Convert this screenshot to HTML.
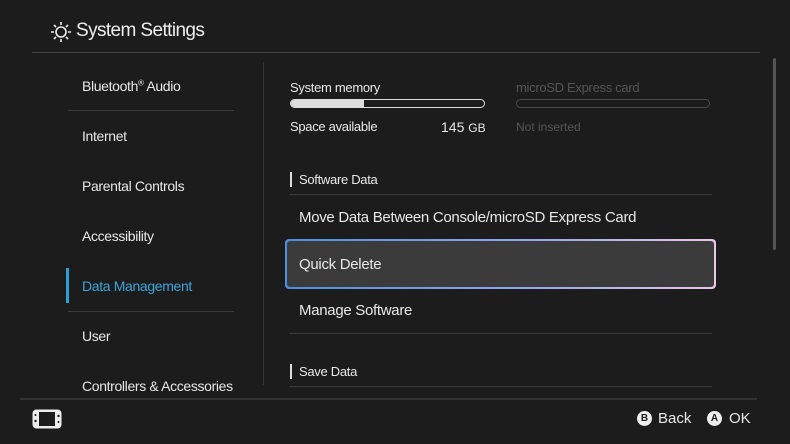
<!DOCTYPE html><html><head><style>
body{margin:0;width:790px;height:444px;background:#1c1c1c;font-family:"Liberation Sans",sans-serif;color:#e8e8e8;position:relative;overflow:hidden}
.a{position:absolute;white-space:nowrap}
.l{font-size:14px;letter-spacing:-0.35px}
.hl{position:absolute;height:1px;background:#3a3a3a}
</style></head><body>
<svg class="a" style="left:50px;top:21px" width="22" height="22" viewBox="0 0 22 22" fill="none" stroke="#eee" stroke-width="1.6"><circle cx="11" cy="11" r="5"/><path d="M11 1v3M11 18v3M1 11h3M18 11h3M4 4l2 2M16 16l2 2M4 18l2-2M16 6l2-2"/></svg>
<div class="a" style="left:76px;top:20px;font-size:19px;letter-spacing:-0.6px;color:#eee">System Settings</div>
<div class="hl" style="left:32px;top:52px;width:728px;background:#444"></div>
<div class="a l" style="left:82px;top:78px">Bluetooth<sup style="font-size:8px">®</sup> Audio</div>
<div class="hl" style="left:68px;top:110px;width:166px"></div>
<div class="a l" style="left:82px;top:128px">Internet</div>
<div class="a l" style="left:82px;top:178px">Parental Controls</div>
<div class="a l" style="left:82px;top:228px">Accessibility</div>
<div class="a" style="left:66px;top:268px;width:3px;height:35px;background:#2aa0d8"></div>
<div class="a l" style="left:82px;top:278px;color:#3aa6dc">Data Management</div>
<div class="hl" style="left:68px;top:311px;width:166px"></div>
<div class="a l" style="left:82px;top:328px">User</div>
<div class="a l" style="left:82px;top:378px">Controllers &amp; Accessories</div>
<div class="a" style="left:263px;top:62px;width:1px;height:323px;background:#333"></div>
<div class="a" style="left:773px;top:58px;width:3px;height:192px;background:#555;border-radius:2px"></div>
<div class="a" style="left:290px;top:80px;font-size:13px;letter-spacing:-0.3px">System memory</div>
<div class="a" style="left:290px;top:99px;width:193px;height:7px;border:1.5px solid #ddd;border-radius:5px;overflow:hidden"><div style="width:73px;height:7px;background:#ddd"></div></div>
<div class="a" style="left:290px;top:119px;font-size:13px;letter-spacing:-0.3px">Space available</div>
<div class="a" style="left:441px;top:119px;font-size:14px">145 <span style="font-size:12px">GB</span></div>
<div class="a" style="left:516px;top:80px;font-size:13px;color:#555;letter-spacing:-0.3px">microSD Express card</div>
<div class="a" style="left:516px;top:99px;width:192px;height:7px;border:1.5px solid #4a4a4a;border-radius:5px"></div>
<div class="a" style="left:516px;top:120px;font-size:12px;color:#555">Not inserted</div>
<div class="a" style="left:290px;top:172px;width:2px;height:15px;background:#ddd"></div>
<div class="a" style="left:299px;top:172px;font-size:13px;letter-spacing:-0.3px">Software Data</div>
<div class="hl" style="left:289px;top:194px;width:423px"></div>
<div class="a" style="left:299px;top:209px;font-size:15px;letter-spacing:-0.3px">Move Data Between Console/microSD Express Card</div>
<div class="a" style="left:285px;top:239px;width:431px;height:50px;border-radius:4px;background:linear-gradient(90deg,#4a8fe0,#9aa8e8 60%,#e8c8e8)"></div>
<div class="a" style="left:287px;top:241px;width:427px;height:46px;border-radius:3px;background:#3c3b3c"></div>
<div class="a" style="left:299px;top:256px;font-size:15px;letter-spacing:-0.3px">Quick Delete</div>
<div class="a" style="left:299px;top:302px;font-size:15px;letter-spacing:-0.3px">Manage Software</div>
<div class="hl" style="left:289px;top:333px;width:423px"></div>
<div class="a" style="left:290px;top:364px;width:2px;height:15px;background:#ddd"></div>
<div class="a" style="left:299px;top:364px;font-size:13px;letter-spacing:-0.3px">Save Data</div>
<div class="hl" style="left:289px;top:386px;width:423px"></div>
<div class="hl" style="left:20px;top:398px;width:737px;background:#333;height:2px"></div>
<svg class="a" style="left:32px;top:409px" width="30" height="20" viewBox="0 0 30 20"><rect x="0.5" y="0.5" width="29" height="19" rx="4" fill="#eee"/><rect x="7" y="3" width="16" height="14" fill="#1c1c1c"/><circle cx="3.5" cy="6" r="1" fill="#1c1c1c"/><circle cx="3.5" cy="12" r="1.2" fill="#1c1c1c"/><circle cx="26.5" cy="7" r="1.2" fill="#1c1c1c"/><circle cx="26.5" cy="13" r="1" fill="#1c1c1c"/></svg>
<div class="a" style="left:637px;top:411px;width:15px;height:15px;border-radius:50%;background:#eee;color:#1c1c1c;font-size:10px;font-weight:bold;text-align:center;line-height:15px">B</div>
<div class="a" style="left:658px;top:410px;font-size:15px">Back</div>
<div class="a" style="left:707px;top:411px;width:15px;height:15px;border-radius:50%;background:#eee;color:#1c1c1c;font-size:10px;font-weight:bold;text-align:center;line-height:15px">A</div>
<div class="a" style="left:729px;top:410px;font-size:15px">OK</div>
</body></html>
